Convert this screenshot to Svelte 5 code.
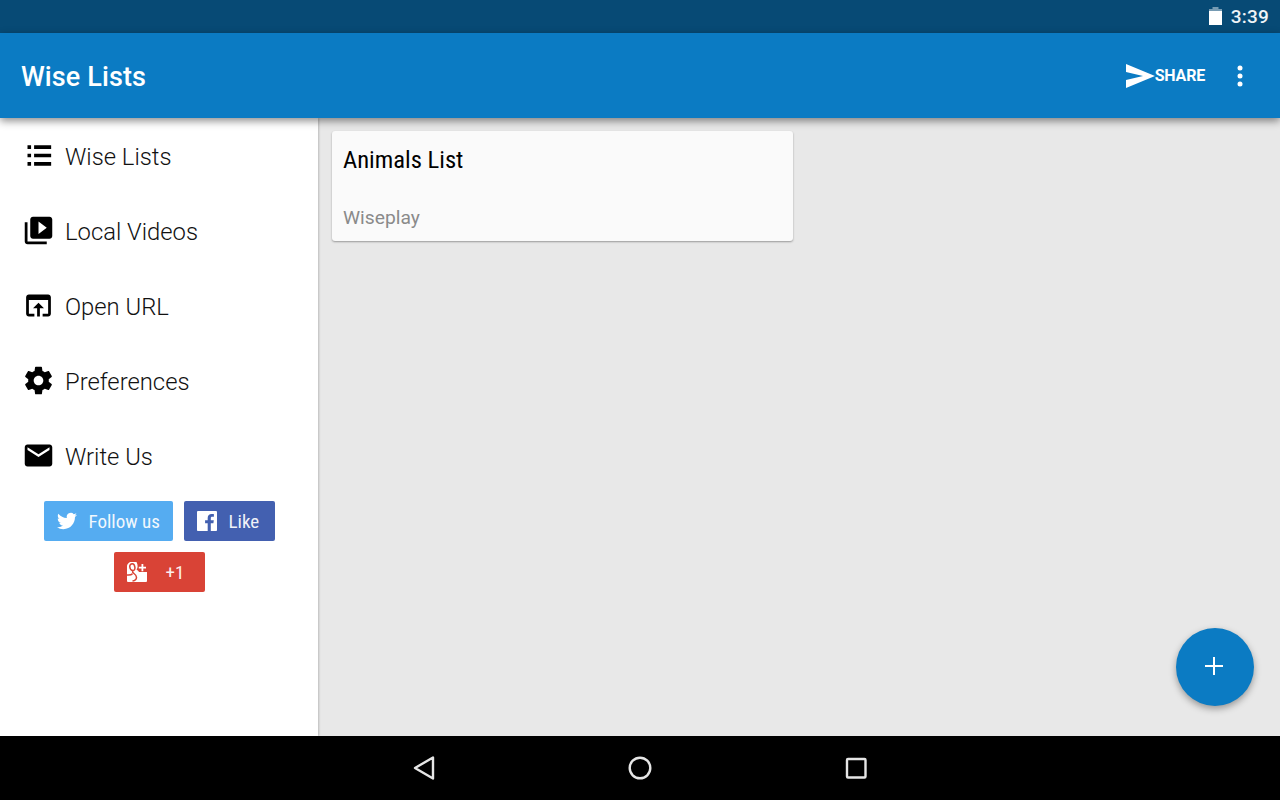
<script>
  const nav = [
    { label: 'Wise Lists', icon: 'list' },
    { label: 'Local Videos', d: 'M4 6H2v14c0 1.1.9 2 2 2h14v-2H4V6zm16-4H8c-1.1 0-2 .9-2 2v12c0 1.1.9 2 2 2h12c1.1 0 2-.9 2-2V4c0-1.1-.9-2-2-2zm-8 12.5v-9l6 4.5-6 4.5z' },
    { label: 'Open URL', d: 'M19 4H5c-1.11 0-2 .9-2 2v12c0 1.1.89 2 2 2h4v-2H5V8h14v10h-4v2h4c1.1 0 2-.9 2-2V6c0-1.1-.89-2-2-2zm-7 6l-4 4h3v6h2v-6h3l-4-4z' },
    { label: 'Preferences', d: 'M19.43 12.98c.04-.32.07-.64.07-.98s-.03-.66-.07-.98l2.11-1.65c.19-.15.24-.42.12-.64l-2-3.46c-.12-.22-.39-.3-.61-.22l-2.49 1c-.52-.4-1.08-.73-1.69-.98l-.38-2.65C14.46 2.18 14.25 2 14 2h-4c-.25 0-.46.18-.49.42l-.38 2.65c-.61.25-1.17.59-1.69.98l-2.49-1c-.23-.09-.49 0-.61.22l-2 3.46c-.13.22-.07.49.12.64l2.11 1.65c-.04.32-.07.65-.07.98s.03.66.07.98l-2.11 1.65c-.19.15-.24.42-.12.64l2 3.46c.12.22.39.3.61.22l2.49-1c.52.4 1.08.73 1.69.98l.38 2.65c.03.24.24.42.49.42h4c.25 0 .46-.18.49-.42l.38-2.65c.61-.25 1.17-.59 1.69-.98l2.49 1c.23.09.49 0 .61-.22l2-3.46c.12-.22.07-.49-.12-.64l-2.11-1.65zM12 15.5c-1.93 0-3.5-1.57-3.5-3.5s1.57-3.5 3.5-3.5 3.5 1.57 3.5 3.5-1.57 3.5-3.5 3.5z' },
    { label: 'Write Us', d: 'M20 4H4c-1.1 0-1.99.9-1.99 2L2 18c0 1.1.9 2 2 2h16c1.1 0 2-.9 2-2V6c0-1.1-.9-2-2-2zm0 4l-8 5-8-5V6l8 5 8-5v2z' }
  ];
</script>

<div class="screen">
  <div class="status">
    <svg class="battery" viewBox="0 0 13 18" width="13" height="18">
      <path d="M3.500 0h6v2H13v16H0V2h3.500z" fill="#fff" opacity="0.45" />
      <path d="M0 4h13v14H0z" fill="#fff" />
    </svg>
    <span class="clock">3:39</span>
  </div>

  <header class="appbar">
    <h1>Wise Lists</h1>
    <div class="actions">
      <svg class="send" viewBox="0 0 29 24" width="29" height="24"><path d="M0 0l29 12L0 24v-8l17-4-17-4z" fill="#fff" /></svg>
      <span class="share">SHARE</span>
      <svg class="more" viewBox="0 0 6 22" width="6" height="22">
        <circle cx="3" cy="3" r="2.500" fill="#fff" />
        <circle cx="3" cy="11" r="2.500" fill="#fff" />
        <circle cx="3" cy="19" r="2.500" fill="#fff" />
      </svg>
    </div>
  </header>

  <main class="body">
    <aside class="drawer">
      {#each nav as item}
        <div class="item">
          <svg class="icon" viewBox="0 0 24 24" width="33" height="33">
            {#if item.icon === 'list'}
              <path d="M4 4.600h2.600v2.600H4zM8.800 4.600h12.400v2.600H8.800zM4 10.700h2.600v2.600H4zM8.800 10.700h12.400v2.600H8.800zM4 16.800h2.600v2.600H4zM8.800 16.800h12.400v2.600H8.800z" />
            {:else}
              <path d={item.d} />
            {/if}
          </svg>
          <span>{item.label}</span>
        </div>
      {/each}
      <div class="social">
        <div class="btn twitter">
          <svg viewBox="0 0 24 24" width="20" height="20"><path fill="#fff" d="M23.95 4.57a10 10 0 0 1-2.82.78 4.96 4.96 0 0 0 2.16-2.72c-.95.55-2 .96-3.12 1.19a4.92 4.92 0 0 0-8.38 4.48C7.69 8.1 4.07 6.13 1.64 3.16a4.82 4.82 0 0 0-.67 2.48c0 1.71.87 3.21 2.19 4.1a4.9 4.9 0 0 1-2.23-.62v.06a4.92 4.92 0 0 0 3.95 4.83 5 5 0 0 1-2.21.08 4.94 4.94 0 0 0 4.6 3.42A9.87 9.87 0 0 1 0 19.54a14 14 0 0 0 7.56 2.21c9.05 0 14-7.5 14-13.98 0-.21 0-.42-.02-.63a9.94 9.94 0 0 0 2.46-2.55z" /></svg>
          <span>Follow us</span>
        </div>
        <div class="btn facebook">
          <svg viewBox="0 0 24 24" width="20" height="20"><path fill="#fff" d="M22.68 0H1.32C.6 0 0 .6 0 1.32v21.36C0 23.4.6 24 1.32 24h11.5v-9.3H9.7v-3.63h3.12V8.41c0-3.1 1.9-4.79 4.66-4.79 1.32 0 2.46.1 2.79.14v3.24h-1.91c-1.5 0-1.79.71-1.79 1.76v2.31h3.57l-.47 3.63h-3.1V24h6.1c.73 0 1.33-.6 1.33-1.32V1.32C24 .6 23.4 0 22.68 0z" /></svg>
          <span>Like</span>
        </div>
        <div class="btn gplus">
          <svg viewBox="0 0 20 20" width="20" height="20">
            <path fill="#fff" d="M0 1a1 1 0 0 1 1-1h18a1 1 0 0 1 1 1v18a1 1 0 0 1-1 1H1a1 1 0 0 1-1-1z" />
            <path fill="#d94336" d="M9.500 0H20v10h-8c-1-1.500-1.500-2-2.500-2.500C11 6 11 3 9.500 0zM0 0h3C1 1 0 3 0 4z" />
            <path fill="#fff" d="M14.500 2h1.800v2.700H19v1.800h-2.700v2.700h-1.800V6.500h-2.700V4.700h2.700z" />
            <path fill="none" stroke="#d94336" stroke-width="1.500" d="M5.300 1.800C3.500 1.800 2.600 3.300 2.800 5c.2 1.900 1.500 3.500 3 3.500 1.600 0 2.300-1.500 2.100-3.100C7.700 3.500 6.800 1.800 5.300 1.800zM6 9c-.7.800-.3 1.500.6 2.200 1.300 1 2.900 2.200 2.900 4 0 2-1.700 3.500-4 3.800M0 13c2.500.3 4.500-.2 5.500-1.300" />
          </svg>
          <span>+1</span>
        </div>
      </div>
    </aside>

    <section class="content">
      <article class="card">
        <h2>Animals List</h2>
        <p>Wiseplay</p>
      </article>
    </section>

    <button class="fab" aria-label="Add">
      <svg viewBox="0 0 18 18" width="18" height="18"><path d="M9 0v18M0 9h18" stroke="#fff" stroke-width="2" fill="none" /></svg>
    </button>
  </main>

  <footer class="sysnav">
    <svg viewBox="0 0 24 26" width="24" height="26"><path d="M21 2.500v21L3 13z" fill="none" stroke="#e6e6e6" stroke-width="2.400" stroke-linejoin="round" /></svg>
    <svg viewBox="0 0 24 24" width="24" height="24"><circle cx="12" cy="12" r="10.300" fill="none" stroke="#e6e6e6" stroke-width="2.400" /></svg>
    <svg viewBox="0 0 24 24" width="24" height="24"><rect x="3" y="3" width="18.500" height="18.500" rx="1" fill="none" stroke="#e6e6e6" stroke-width="2.400" /></svg>
  </footer>
</div>

<style>
  :global(body) {
    margin: 0;
    background: #e8e8e8;
  }
  .screen {
    width: 1280px;
    height: 800px;
    display: flex;
    flex-direction: column;
    overflow: hidden;
    font-family: Roboto, "Liberation Sans", sans-serif;
  }
  .status {
    height: 33px;
    flex: none;
    background: #074a75;
    display: flex;
    align-items: center;
    justify-content: flex-end;
    padding-right: 11px;
    color: #fff;
    gap: 9px;
  }
  .battery {
    margin-top: -1px;
  }
  .clock {
    font-size: 19px;
    font-weight: 500;
    letter-spacing: 0.2px;
    color: #f0f4f7;
  }
  .appbar {
    height: 85px;
    flex: none;
    background: #0b7bc3;
    display: flex;
    align-items: center;
    justify-content: space-between;
    padding: 0 37px 0 21px;
    box-shadow: 0 3px 8px rgba(0, 0, 0, 0.45);
    position: relative;
    z-index: 2;
  }
  h1 {
    margin: 2px 0 0;
    font-size: 27px;
    font-weight: 500;
    letter-spacing: 0.1px;
    color: #fff;
  }
  .actions {
    display: flex;
    align-items: center;
  }
  .share {
    font-size: 16px;
    font-weight: 700;
    color: #fff;
    margin-left: 0;
    margin-right: 32px;
    letter-spacing: -0.2px;
  }
  .more {
    margin-top: 1px;
  }
  .body {
    flex: 1;
    display: flex;
    position: relative;
    min-height: 0;
  }
  .drawer {
    width: 318px;
    flex: none;
    background: #fff;
    box-shadow: 1px 0 2px rgba(0, 0, 0, 0.2);
    position: relative;
    z-index: 1;
    display: flex;
    flex-direction: column;
  }
  .item {
    height: 75px;
    flex: none;
    display: flex;
    align-items: center;
    padding-left: 22px;
    box-sizing: border-box;
    color: #111;
    font-size: 23.8px;
    font-weight: 300;
    gap: 10px;
  }
  .item span {
    padding-top: 3px;
  }
  .icon {
    flex: none;
    fill: #000;
  }
  .social {
    display: flex;
    flex-wrap: wrap;
    justify-content: center;
    gap: 11px;
    margin-top: 8px;
    padding: 0 30px;
  }
  .btn {
    height: 40px;
    border-radius: 2px;
    display: flex;
    align-items: center;
    box-sizing: border-box;
    color: #fff;
    font-size: 19px;
    font-stretch: 75%;
  }
  .btn span {
    opacity: 0.92;
    padding-top: 1px;
  }
  .twitter {
    width: 129px;
    background: #55acf1;
    padding-left: 13px;
    gap: 12px;
  }
  .facebook {
    width: 91px;
    background: #4360b0;
    padding-left: 13px;
    gap: 12px;
  }
  .gplus {
    width: 91px;
    background: #d94336;
    padding-left: 13px;
    gap: 19px;
  }
  .content {
    flex: 1;
    background: #e8e8e8;
    padding: 13px 12px 0 14px;
  }
  .card {
    width: 461px;
    height: 110px;
    background: #fafafa;
    border-radius: 3px;
    box-shadow: 0 1px 2px rgba(0, 0, 0, 0.35);
    padding: 0 11px;
    box-sizing: border-box;
    display: flex;
    flex-direction: column;
  }
  h2 {
    margin: 14px 0 0;
    font-size: 24.6px;
    line-height: 30px;
    font-weight: 400;
    font-stretch: 75%;
    color: #000;
  }
  p {
    margin: 30px 0 0;
    font-size: 19.25px;
    line-height: 26px;
    color: #8a8a8a;
  }
  .fab {
    position: absolute;
    left: 1176px;
    top: 510px;
    width: 78px;
    height: 78px;
    border: 0;
    padding: 0;
    border-radius: 50%;
    background: #0b7bc3;
    display: flex;
    align-items: center;
    justify-content: center;
    box-shadow: 0 3px 7px rgba(0, 0, 0, 0.35);
    z-index: 3;
  }
  .fab svg {
    transform: translate(-1px, -1px);
  }
  .sysnav {
    height: 64px;
    flex: none;
    background: #000;
    display: flex;
    align-items: center;
    justify-content: center;
    gap: 192px;
  }
</style>
